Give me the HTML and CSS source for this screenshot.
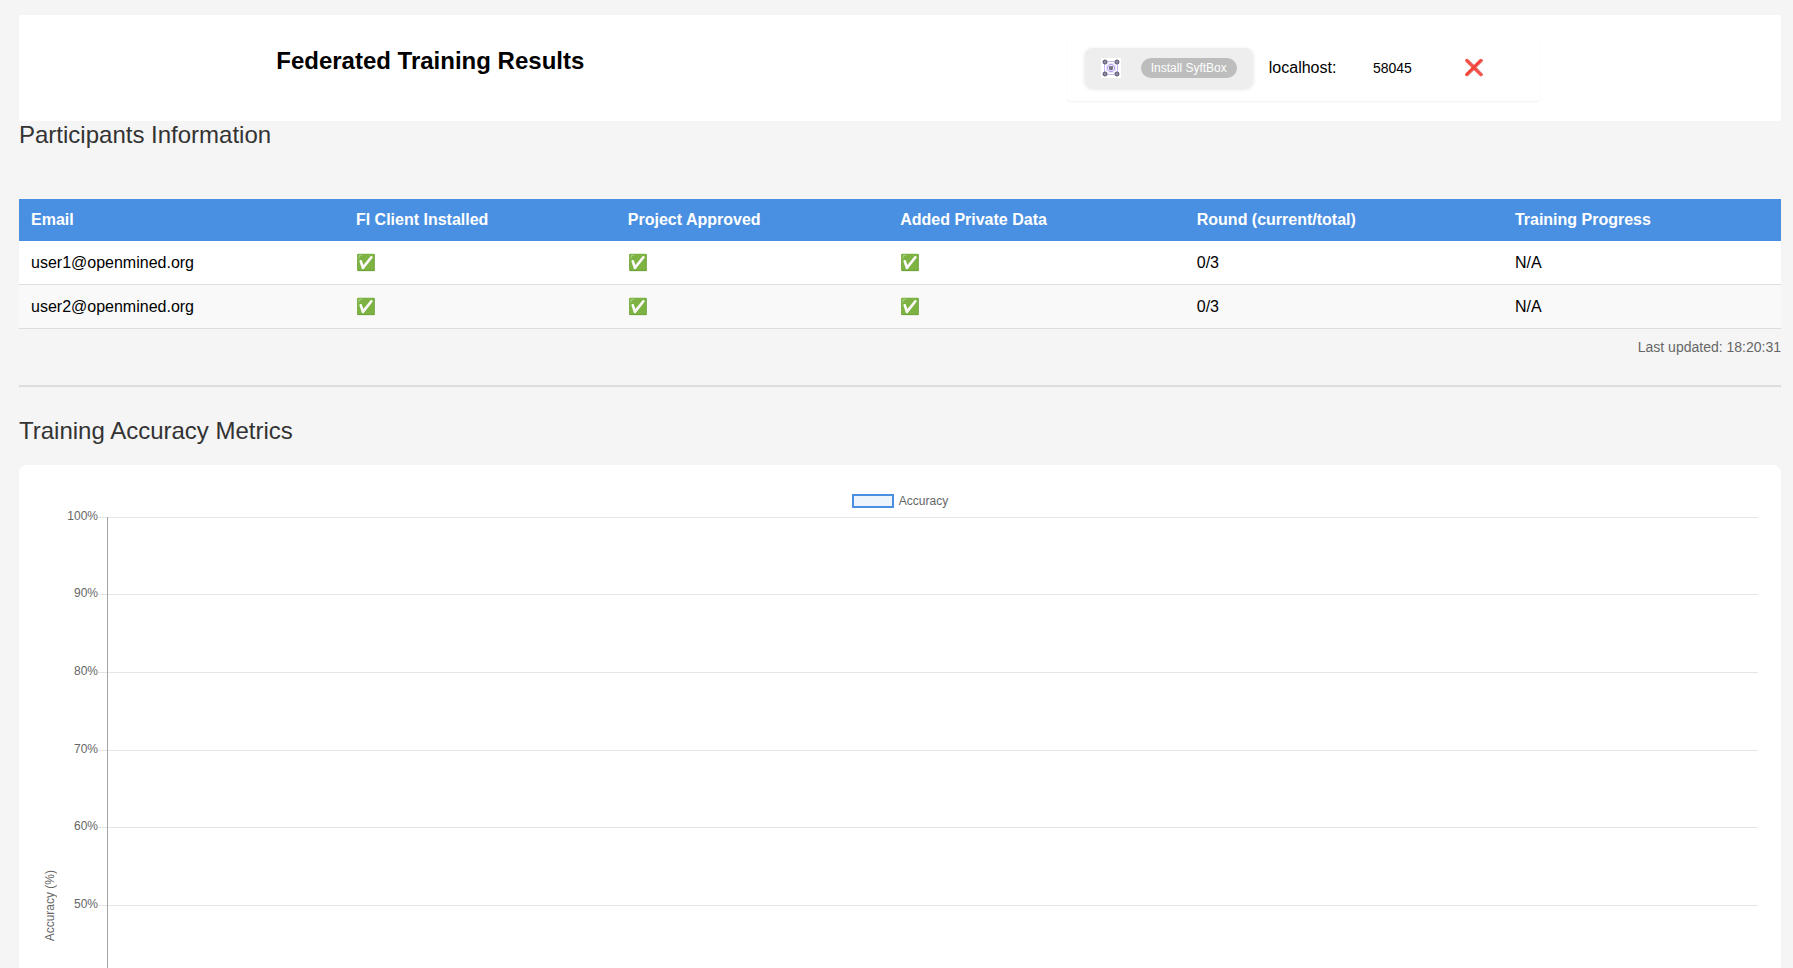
FILE: index.html
```html
<!DOCTYPE html>
<html lang="en">
<head>
<meta charset="utf-8">
<meta name="viewport" content="width=device-width, initial-scale=1">
<title>Federated Training Results</title>
<link rel="stylesheet" href="styles.css">
</head>
<body>
<header class="header">
  <h1 class="title">Federated Training Results</h1>
  <div class="connection">
    <button class="install" type="button">
      <svg class="logo" viewBox="0 0 20 20" aria-hidden="true">
        <rect width="20" height="20" fill="#fff"/>
        <g fill="none" stroke="#c9b8f5">
          <path d="M6 3.5h8M6 16.5h8M3.5 6v8M16.500 6v8"/>
          <path d="M5.500 5.500v9h9v-9z" stroke="#ece6fc"/>
          <circle cx="10" cy="10" r="3.700" fill="#f1edfd" stroke="#b29cf2"/>
        </g>
        <path d="M8 8.500h4v2.500l-2 1.500l-2-1.500z" fill="#8a879c"/>
        <path d="M8 9h4M8.500 11h3" stroke="#5a5870"/>
        <g fill="#8f8ea2" stroke="#55536b">
          <circle cx="4" cy="4" r="2"/><circle cx="16" cy="4" r="2"/>
          <circle cx="4" cy="16" r="2"/><circle cx="16" cy="16" r="2"/>
        </g>
      </svg>
      <span class="pill">Install SyftBox</span>
    </button>
    <label for="port">localhost:</label>
    <input class="port" id="port" type="text" value="58045">
    <span class="status">❌</span>
  </div>
</header>
<main>
  <section class="participants">
    <h2 class="heading">Participants Information</h2>
    <table class="table">
      <thead>
        <tr><th>Email</th><th>Fl Client Installed</th><th>Project Approved</th><th>Added Private Data</th><th>Round (current/total)</th><th>Training Progress</th></tr>
      </thead>
      <tbody>
        <tr><td>user1@openmined.org</td><td>✅</td><td>✅</td><td>✅</td><td>0/3</td><td>N/A</td></tr>
        <tr><td>user2@openmined.org</td><td>✅</td><td>✅</td><td>✅</td><td>0/3</td><td>N/A</td></tr>
      </tbody>
    </table>
    <p class="updated">Last updated: 18:20:31</p>
  </section>
  <section class="metrics">
    <h2 class="heading">Training Accuracy Metrics</h2>
    <div class="card">
      <div class="legend"><span class="swatch"></span>Accuracy</div>
      <div class="chart">
        <div class="axis-title">Accuracy (%)</div>
        <div class="plot">
          <div class="tick"><span>100%</span></div>
          <div class="tick"><span>90%</span></div>
          <div class="tick"><span>80%</span></div>
          <div class="tick"><span>70%</span></div>
          <div class="tick"><span>60%</span></div>
          <div class="tick"><span>50%</span></div>
          <div class="tick"><span>40%</span></div>
          <div class="tick"><span>30%</span></div>
          <div class="tick"><span>20%</span></div>
          <div class="tick"><span>10%</span></div>
          <div class="tick"><span>0%</span></div>
        </div>
      </div>
    </div>
  </section>
</main>
</body>
</html>
```
FILE: styles.css
```css
* {
  box-sizing: border-box;
}

body {
  margin: 15px 12px 15px 19px;
  background: #f5f5f5;
  color: #000;
  font: 16px "Liberation Sans", Arial, sans-serif;
}

.header {
  display: flex;
  justify-content: space-around;
  align-items: flex-start;
  padding: 20px 0;
  background: #fff;
}

.title {
  margin: 12px 0 0;
  padding-left: 16px;
  font-size: 24px;
  line-height: 28px;
}

.connection {
  display: flex;
  align-items: center;
  gap: 16px;
  width: 473px;
  padding: 13px 16px 13px 18px;
  border-radius: 4px;
  box-shadow: 0 1px 2px rgba(0, 0, 0, 0.06);
}

.install {
  display: flex;
  align-items: center;
  gap: 20px;
  padding: 10px 16px;
  border: 0;
  border-radius: 8px;
  background: #eee;
  box-shadow: 0 1px 4px rgba(0, 0, 0, 0.12);
}

.logo {
  width: 20px;
  height: 20px;
}

.pill {
  padding: 0 10px;
  border-radius: 10px;
  background: #bdbdbd;
  color: #fff;
  font: 12px/20px "Liberation Sans", Arial, sans-serif;
}

.port {
  width: 80px;
  padding: 0;
  border: 0;
  background: transparent;
  font: 14px/20px "Liberation Sans", Arial, sans-serif;
  text-align: center;
}

.status {
  padding-left: 16px;
  line-height: 20px;
}

.heading {
  margin: 0;
  color: #333;
  font-size: 24px;
  font-weight: 400;
  line-height: 28px;
}

.table {
  width: 100%;
  margin-top: 50px;
  border-collapse: collapse;
  background: #fff;
}

.table th {
  padding: 12px;
  background: #4a90e2;
  color: #fff;
  line-height: 18px;
  text-align: left;
}

.table td {
  padding: 12px;
  border-bottom: 1px solid #ddd;
  line-height: 19px;
}

.table tbody tr:nth-child(even) {
  background: #f9f9f9;
}

.updated {
  margin: 10px 0 30px;
  color: #666;
  font-size: 14px;
  line-height: 16px;
  text-align: right;
}

.metrics {
  padding-top: 30px;
  border-top: 2px solid #ddd;
}

.card {
  margin-top: 20px;
  padding: 28px 23px;
  border-radius: 8px;
  background: #fff;
  color: #666;
  font-size: 12px;
  line-height: 16px;
}

.legend {
  display: flex;
  justify-content: center;
  align-items: center;
  gap: 5px;
}

.swatch {
  width: 42px;
  height: 14px;
  border: 2px solid #4a90e2;
  background: #edf4fc;
}

.chart {
  display: flex;
  align-items: center;
}

.axis-title {
  width: 16px;
  writing-mode: vertical-rl;
  transform: rotate(180deg);
}

.plot {
  position: relative;
  display: flex;
  flex: 1;
  flex-direction: column;
  justify-content: space-between;
  height: 793px;
}

.plot::after {
  content: "";
  position: absolute;
  top: 8px;
  bottom: 8px;
  left: 49px;
  width: 1px;
  background: #a3a3a3;
}

.tick {
  display: flex;
  align-items: center;
  height: 16px;
}

.tick span {
  width: 40px;
  padding-bottom: 3px;
  text-align: right;
}

.tick::after {
  content: "";
  flex: 1;
  height: 1px;
  background: #e5e5e5;
}
```
